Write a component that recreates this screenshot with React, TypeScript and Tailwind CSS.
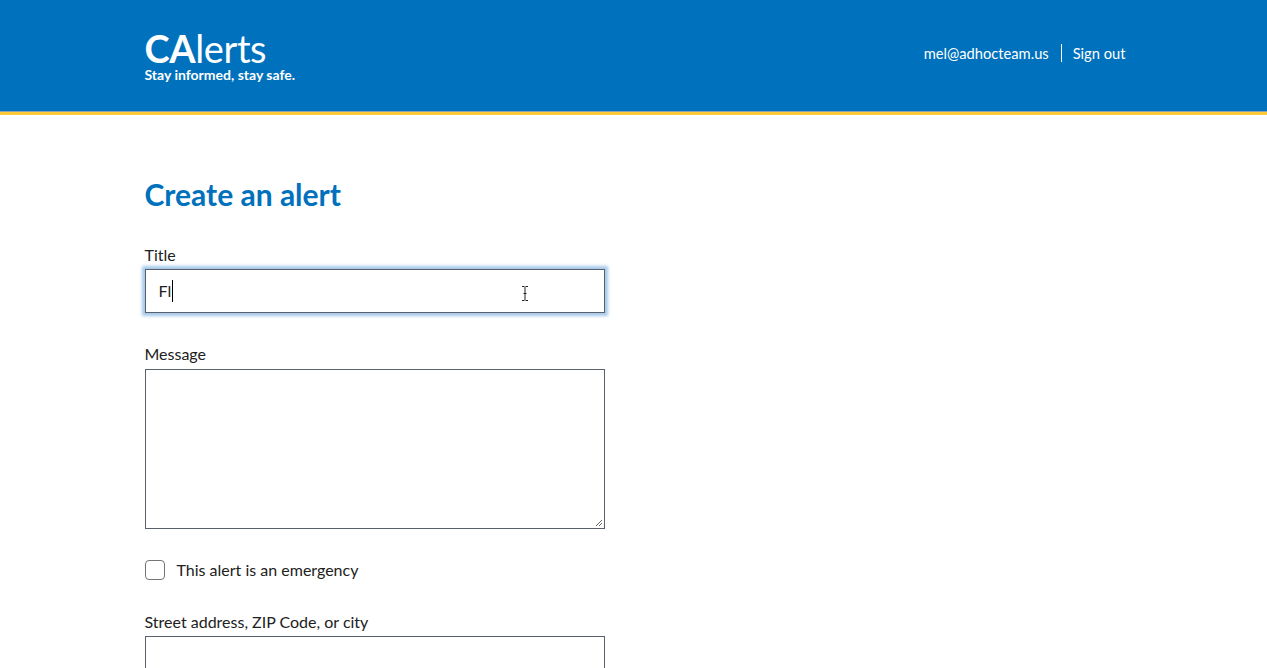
import React from "react";

export default function App() {
  const font = { fontFamily: '"Lato", "Source Sans Pro", "Liberation Sans", sans-serif' };
  return (
    <div className="min-h-[668px] bg-white text-[#212121]" style={font}>
      <header className="bg-[#0071bc] border-b-[3px] border-[#fdcb3a] h-[115px] shadow-[inset_0_-1px_0_#8aa0b0]">
        <div className="max-w-[978px] mx-auto flex items-start justify-between pt-[30px]">
          <div className="text-white">
            <div className="text-[38px] leading-[36px] tracking-[-0.4px]">
              <span className="font-bold">CA</span>
              <span className="font-normal">lerts</span>
            </div>
            <div className="text-[14px] font-bold leading-[15px] mt-[1px]">Stay informed, stay safe.</div>
          </div>
          <div className="flex items-center text-white text-[14.7px] mt-[12px] -mr-[3px]">
            <span>mel@adhocteam.us</span>
            <span className="ml-[12px] mr-[11px] w-px h-[18px] bg-white" />
            <span>Sign out</span>
          </div>
        </div>
      </header>
      <main className="max-w-[978px] mx-auto pt-[60px]">
        <h1 className="text-[30px] font-bold text-[#0071bc] leading-[40px] -mt-[1px]">Create an alert</h1>
        <form className="w-[460px]">
          <label className="block text-[16px] leading-[25px] mt-[28px]">Title</label>
          <div className="relative mt-[2px] h-[44px] border border-[#5b616b] shadow-[0_0_3px_3px_#a5c8ea] flex items-center pl-[13px] text-[16px]">
            <span>Fl</span>
            <span className="w-px h-[22px] bg-black ml-px" />
            <svg className="absolute left-[375px] top-[16px]" width="8" height="15" viewBox="0 0 8 15">
              <path d="M1 0.5h2.5M4.5 0.5h2.5M4 1v13M1 14.5h2.5M4.5 14.5h2.5M2.5 7.5h3" stroke="#222" strokeWidth="1" fill="none" />
            </svg>
          </div>
          <label className="block text-[16px] leading-[25px] mt-[28px]">Message</label>
          <div className="relative mt-[3px] h-[160px] border border-[#5b616b]">
            <svg className="absolute right-[1px] bottom-[1px]" width="8" height="8" viewBox="0 0 8 8">
              <path d="M7 1L1 7M7 4L4 7" stroke="#666" strokeWidth="1" fill="none" />
            </svg>
          </div>
          <div className="flex items-center mt-[30px]">
            <span className="w-[20px] h-[20px] border border-[#757575] rounded-[4px] bg-white" />
            <span className="ml-[12px] text-[16px] leading-[22px]">This alert is an emergency</span>
          </div>
          <label className="block text-[16px] leading-[25px] mt-[28px]">Street address, ZIP Code, or city</label>
          <div className="mt-[2px] h-[44px] border border-[#5b616b]" />
        </form>
      </main>
    </div>
  );
}
